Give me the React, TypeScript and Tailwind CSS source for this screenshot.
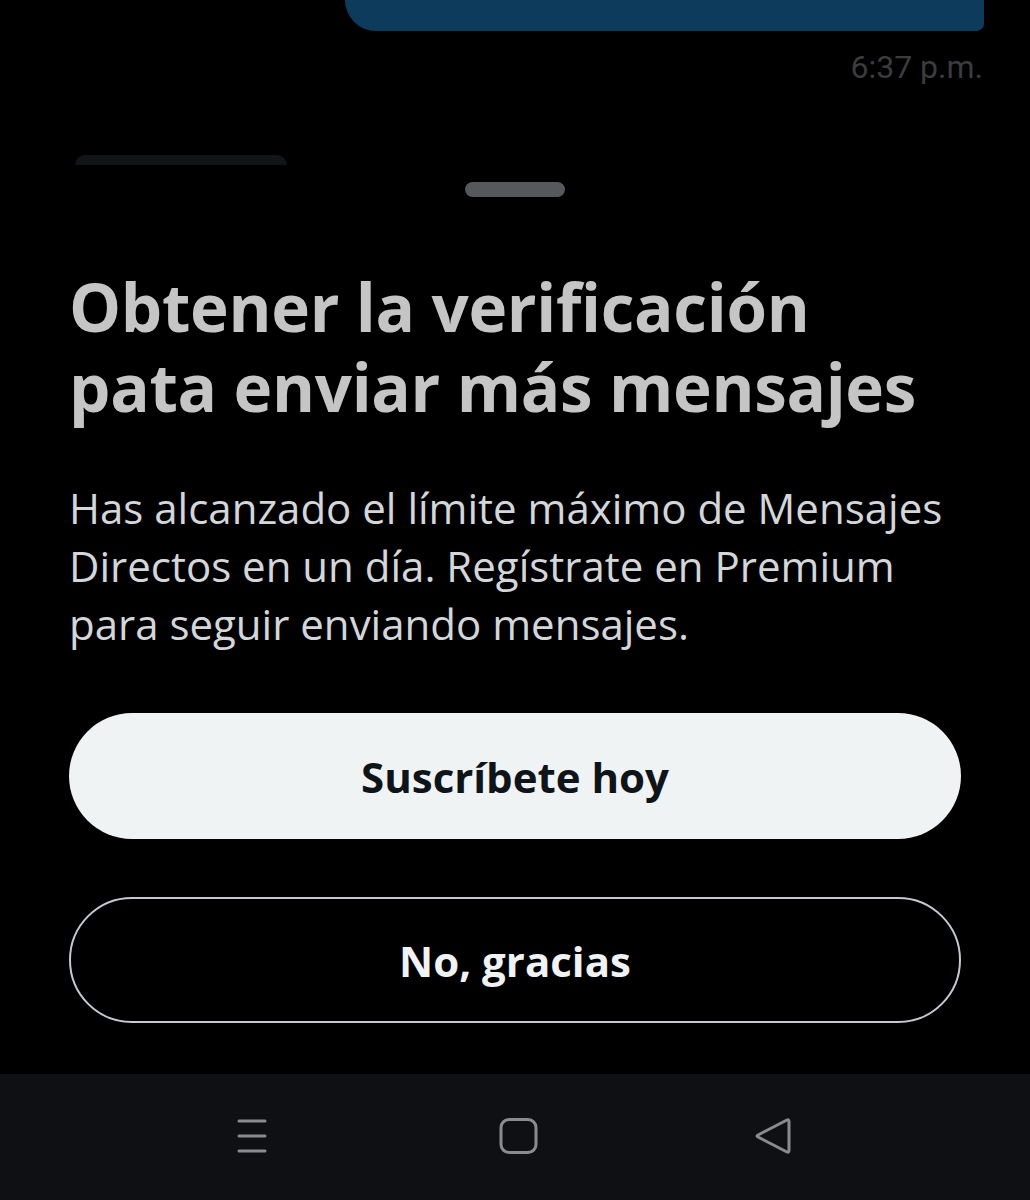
import React from 'react';

const NavBar: React.FC = () => (
  <div className="h-[126px] bg-[#0e1014] flex items-center">
    <div className="flex items-center -mt-[2px]">
      {/* recents */}
      <svg width="30" height="36" viewBox="0 0 30 36" className="ml-[237px]">
        <g stroke="#8a8b8e" strokeWidth="3" strokeLinecap="round">
          <line x1="2" y1="3" x2="28" y2="3" />
          <line x1="2" y1="18" x2="28" y2="18" />
          <line x1="2" y1="33" x2="28" y2="33" />
        </g>
      </svg>
      {/* home */}
      <svg width="39" height="36" viewBox="0 0 39 36" className="ml-[232px]">
        <rect x="2" y="1.5" width="35" height="33" rx="8" fill="none" stroke="#8a8b8e" strokeWidth="3" />
      </svg>
      {/* back */}
      <svg width="38" height="38" viewBox="0 0 38 38" className="ml-[216px]">
        <path d="M33 3 Q35 2 35 5 L35 33 Q35 36 33 35 L4 20 Q2 19 4 18 Z" fill="none" stroke="#8a8b8e" strokeWidth="3" strokeLinejoin="round" />
      </svg>
    </div>
  </div>
);

export default function App() {
  return (
    <div className="w-[1030px] h-[1200px] bg-black flex flex-col overflow-hidden" style={{ fontFamily: 'Roboto, sans-serif' }}>
      {/* dimmed conversation behind the sheet */}
      <div className="h-[165px] flex flex-col">
        <div className="ml-[345px] mr-[46px] h-[31px] bg-[#0d3b5c] rounded-bl-[34px] rounded-br-[8px]" />
        <div className="mt-[18px] pr-[47px] text-right text-[32px] leading-[36px] text-[#3b3c3e] font-['Roboto',sans-serif]">
          6:37 p.m.
        </div>
        <div className="mt-auto ml-[75px] w-[212px] h-[10px] rounded-t-[40px] bg-[#121419]" />
      </div>

      {/* bottom sheet */}
      <div className="flex-1 bg-black flex flex-col px-[69px]">
        <div className="self-center mt-[17px] w-[100px] h-[15px] rounded-full bg-[#56585c]" />
        <h1 className="mt-[70px] text-[#c5c5c5] font-['Open_Sans',sans-serif] font-bold text-[65.5px] leading-[80px] tracking-[-0.3px]">
          Obtener la verificación
          <br />
          pata enviar más mensajes
        </h1>
        <p className="mt-[52px] text-[#d3d7d9] font-['Open_Sans',sans-serif] text-[42px] leading-[58px]">
          Has alcanzado el límite máximo de Mensajes
          <br />
          Directos en un día. Regístrate en Premium
          <br />
          para seguir enviando mensajes.
        </p>
        <button className="mt-[60px] h-[126px] w-[892px] rounded-full bg-[#eff3f4] text-[#0f1419] font-['Open_Sans',sans-serif] font-bold text-[42px] flex items-center justify-center">
          Suscríbete hoy
        </button>
        <button className="mt-[58px] h-[126px] w-[892px] rounded-full border-[2px] border-[#c3cbd0] text-[#eff3f4] font-['Open_Sans',sans-serif] font-bold text-[42px] flex items-center justify-center">
          No, gracias
        </button>
      </div>

      <NavBar />
    </div>
  );
}
